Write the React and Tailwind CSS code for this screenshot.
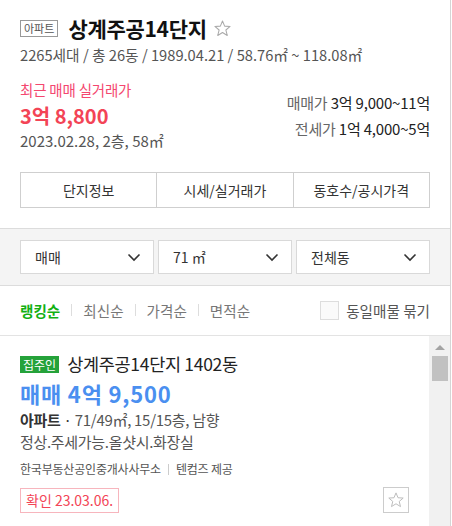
import React from "react";

const font = { fontFamily: '"Noto Sans CJK KR", "Noto Sans", sans-serif' };

function Chevron() {
  return (
    <svg width="14" height="9" viewBox="0 0 14 9" fill="none">
      <path d="M1.5 1.5 L7 7 L12.5 1.5" stroke="#333" strokeWidth="1.6" />
    </svg>
  );
}

function Star({ size = 18, color = "#b5b5b5" }) {
  return (
    <svg width={size} height={size} viewBox="0 0 24 24" fill="none">
      <path
        d="M12 2.5 L14.7 9 L21.6 9.4 L16.3 13.9 L18 20.8 L12 17 L6 20.8 L7.7 13.9 L2.4 9.4 L9.3 9 Z"
        stroke={color}
        strokeWidth="1.3"
        strokeLinejoin="round"
      />
    </svg>
  );
}

function Select({ label }) {
  return (
    <div className="flex-1 h-[34px] bg-white border border-[#d9d9d9] flex items-center justify-between pl-[14px] pr-[12px] text-[14px] text-[#333]">
      <span>{label}</span>
      <Chevron />
    </div>
  );
}

export default function App() {
  return (
    <div style={font} className="w-[451px] h-[526px] overflow-hidden border-r border-[#d5d5d5] bg-white text-[#222]">
      {/* header */}
      <div className="pl-[20px] pr-[20px] pt-[14px] pb-[20px] border-b border-[#dcdcdc]">
        <div className="flex items-center h-[28px]">
          <span className="border border-[#999] text-[11px] leading-[15px] px-[3px] text-[#555] mr-[10px]">아파트</span>
          <span className="text-[21px] font-bold leading-[28px] text-[#111] tracking-[-0.3px]">상계주공14단지</span>
          <span className="ml-[6px] mt-[1px]"><Star size={19} color="#aaa" /></span>
        </div>
        <div className="text-[14.7px] leading-[20px] text-[#555] mt-[3px]">
          2265세대 / 총 26동 / 1989.04.21 / 58.76㎡ ~ 118.08㎡
        </div>
        <div className="flex justify-between mt-[15px]">
          <div>
            <div className="text-[14.5px] leading-[20px] text-[#f4476f] tracking-[-0.2px]">최근 매매 실거래가</div>
            <div className="text-[20px] font-bold leading-[26px] text-[#f34456] mt-[3px]">3억 8,800</div>
            <div className="text-[15px] leading-[20px] text-[#555] mt-[2px]">2023.02.28, 2층, 58㎡</div>
          </div>
          <div className="flex flex-col items-end pt-[12px] tracking-[-0.2px]">
            <div className="text-[15px] leading-[22px]"><span className="text-[#666]">매매가</span> <span className="text-[#222]">3억 9,000~11억</span></div>
            <div className="text-[15px] leading-[22px] mt-[4px]"><span className="text-[#666]">전세가</span> <span className="text-[#222]">1억 4,000~5억</span></div>
          </div>
        </div>
        <div className="flex mt-[21px] h-[36px] border border-[#cfcfcf] text-[14px] text-[#333]">
          <div className="flex-1 flex items-center justify-center border-r border-[#cfcfcf]">단지정보</div>
          <div className="flex-1 flex items-center justify-center border-r border-[#cfcfcf]">시세/실거래가</div>
          <div className="flex-1 flex items-center justify-center">동호수/공시가격</div>
        </div>
      </div>

      {/* filters */}
      <div className="bg-[#f4f4f4] h-[57px] border-b border-[#dcdcdc] px-[20px] pt-[11px] flex gap-[4px]">
        <Select label="매매" />
        <Select label="71 ㎡" />
        <Select label="전체동" />
      </div>

      {/* sort */}
      <div className="h-[50px] border-b border-[#e3e3e3] flex items-center justify-between pl-[20px] pr-[20px] text-[14.6px]">
        <div className="flex items-center">
          <span className="text-[#12b012] font-bold">랭킹순</span>
          <span className="mx-[11px] w-px h-[12px] bg-[#ddd]" />
          <span className="text-[#777]">최신순</span>
          <span className="mx-[11px] w-px h-[12px] bg-[#ddd]" />
          <span className="text-[#777]">가격순</span>
          <span className="mx-[11px] w-px h-[12px] bg-[#ddd]" />
          <span className="text-[#777]">면적순</span>
        </div>
        <div className="flex items-center">
          <span className="w-[19px] h-[19px] border border-[#ddd] bg-[#fafafa] mr-[7px]" />
          <span className="text-[#555]">동일매물 묶기</span>
        </div>
      </div>

      {/* listing */}
      <div className="flex h-[200px]">
        <div className="flex-1 pl-[20px] pt-[16px]">
          <div className="flex items-center h-[24px]">
            <span className="bg-[#25a23a] text-white text-[12px] leading-[17px] px-[3px] mr-[8px]">집주인</span>
            <span className="text-[17.5px] text-[#222] leading-[24px] tracking-[-0.3px]">상계주공14단지 1402동</span>
          </div>
          <div className="text-[22px] font-bold text-[#4a8ff0] leading-[28px] mt-[3px] tracking-[0.8px]">매매 4억 9,500</div>
          <div className="text-[15px] leading-[22px] mt-[2px] tracking-[-0.3px]">
            <span className="font-bold text-[#333]">아파트</span>
            <span className="text-[#333]"> · </span>
            <span className="text-[#555]">71/49㎡, 15/15층, 남향</span>
          </div>
          <div className="text-[15px] leading-[22px] text-[#555] tracking-[-0.3px]">정상.주세가능.올샷시.화장실</div>
          <div className="flex items-center text-[12px] leading-[18px] text-[#555] mt-[7px] tracking-[-0.2px]">
            <span>한국부동산공인중개사사무소</span>
            <span className="mx-[7px] w-px h-[11px] bg-[#ccc]" />
            <span>텐컴즈 제공</span>
          </div>
          <div className="flex items-center justify-between mt-[9px] pr-[20px]">
            <span className="border border-[#f7b5bd] text-[#f34456] text-[14px] leading-[23px] px-[5px]">확인 23.03.06.</span>
            <span className="w-[26px] h-[26px] border border-[#ccc] flex items-center justify-center"><Star size={18} color="#bbb" /></span>
          </div>
        </div>
        <div className="w-[21px] bg-[#f1f1f1] flex flex-col items-center pt-[8px]">
          <svg width="10" height="6" viewBox="0 0 10 6"><path d="M0 6 L5 1 L10 6 Z" fill="#a3a3a3" /></svg>
          <div className="w-[16px] h-[25px] bg-[#c1c1c1] mt-[6px]" />
        </div>
      </div>
    </div>
  );
}
